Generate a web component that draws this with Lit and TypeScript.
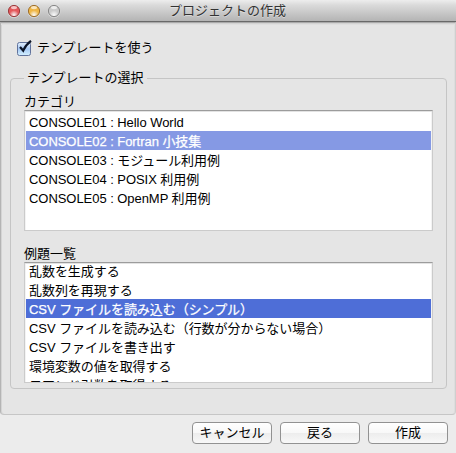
import { LitElement, html, css } from "lit";
import { customElement, property } from "lit/decorators.js";
import { classMap } from "lit/directives/class-map.js";

@customElement("list-box")
class ListBox extends LitElement {
  @property({ attribute: false }) items: string[] = [];
  @property({ type: Number }) selected = -1;
  @property({ type: Boolean, reflect: true }) focused = false;
  @property({ type: Boolean, reflect: true }) scrolled = false;

  static styles = css`
    :host {
      display: block;
      box-sizing: border-box;
      height: 121px;
      border: 1px solid #cbcbcb;
      border-top-color: #9c9c9c;
      padding: 1px 1px 0 1px;
      background: #fff;
      box-shadow: inset 0 1px #e3e3e3, inset -1px 0 #f3f3f3, inset 1px 0 #f3f3f3;
    }
    .view {
      height: 118px;
      overflow: hidden;
      letter-spacing: -0.05px;
    }
    .row {
      height: 19px;
      line-height: 21px;
      padding-left: 3px;
      white-space: pre;
    }
    :host([scrolled]) .row:first-child {
      margin-top: -3px;
    }
    .selected {
      color: #fff;
      background: #8599e4;
      -webkit-text-stroke: 0.25px #fff;
    }
    :host([focused]) .selected {
      background: #4e6ed7;
    }
  `;

  render() {
    return html`<div class="view">
      ${this.items.map(
        (t, i) =>
          html`<div class=${classMap({ row: true, selected: i === this.selected })}>${t}</div>`
      )}
    </div>`;
  }
}

@customElement("app-root")
class AppRoot extends LitElement {
  private categories = [
    "CONSOLE01 : Hello World",
    "CONSOLE02 : Fortran 小技集",
    "CONSOLE03 : モジュール利用例",
    "CONSOLE04 : POSIX 利用例",
    "CONSOLE05 : OpenMP 利用例",
  ];
  private examples = [
    "乱数を生成する",
    "乱数列を再現する",
    "CSV ファイルを読み込む（シンプル）",
    "CSV ファイルを読み込む（行数が分からない場合）",
    "CSV ファイルを書き出す",
    "環境変数の値を取得する",
    "コマンド引数を取得する",
  ];

  static styles = css`
    :host {
      display: flex;
      flex-direction: column;
      box-sizing: border-box;
      width: 456px;
      height: 453px;
      overflow: hidden;
      background: #ececec;
      color: #000;
      font: 13px "Liberation Sans", "Noto Sans CJK JP", sans-serif;
    }
    .titlebar {
      flex: none;
      position: relative;
      height: 22px;
      box-sizing: border-box;
      border-bottom: 1px solid #696969;
      border-radius: 4px 4px 0 0;
      background: linear-gradient(#ededed, #dadada 25%, #b4b4b4);
      display: flex;
      justify-content: center;
    }
    .title {
      line-height: 21px;
      color: #333;
      padding-right: 1px;
      text-shadow: 0 1px rgba(255, 255, 255, 0.4);
    }
    .lights {
      position: absolute;
      left: 7px;
      top: 4px;
      display: flex;
    }
    .panel {
      flex: none;
      box-sizing: border-box;
      height: 393px;
      padding: 17px 9px 0 9px;
      background: #e5e5e5;
      border: 1px solid #c6c6c6;
      border-top-color: #aaa;
      border-left-color: #b4b4b4;
      border-right-color: #cfcfcf;
      border-radius: 0 0 4px 4px;
      box-shadow: inset 0 1px #d3d3d3, inset 0 2px #dfdfdf, inset 1px 0 #d4d4d4,
        inset -1px 0 #dedede;
    }
    .check {
      display: flex;
      align-items: center;
      height: 17px;
      padding-left: 6px;
      gap: 5px;
    }
    .check svg {
      flex: none;
    }
    .check span {
      line-height: 17px;
      padding-bottom: 2px;
    }
    fieldset {
      box-sizing: border-box;
      height: 319px;
      width: 437px;
      margin: 13px 0 0;
      padding: 6px 13px 0;
      min-width: 0;
      border: 1px solid #c5c5c5;
      border-radius: 4px;
    }
    legend {
      height: 17px;
      line-height: 15px;
      padding: 0 3px;
    }
    .label {
      height: 17px;
      line-height: 18px;
    }
    .label.second {
      margin-top: 14px;
    }
    .buttons {
      display: flex;
      justify-content: flex-end;
      gap: 8px;
      padding: 7px 8px 0 0;
    }
    button {
      box-sizing: border-box;
      width: 80px;
      height: 22px;
      padding: 0;
      font: inherit;
      line-height: 20px;
      color: #000;
      border: 1px solid #929292;
      border-radius: 4px;
      background: linear-gradient(#fff, #f8f8f8 48%, #ededed 52%, #f8f8f8);
    }
  `;

  private light(id: number, fill: string, rim: string) {
    return html`<svg width="20" height="14" viewBox="0 0 20 14">
      <circle cx="7" cy="7.8" r="6" fill="none" stroke="#ddd" stroke-width=".7" />
      <circle cx="7" cy="7" r="5.6" fill="url(#l${id})" stroke=${rim} stroke-width="1" />
      <defs>
        <radialGradient id="l${id}" cx=".5" cy=".85" r=".75">
          <stop offset="0" stop-color="#fff" stop-opacity=".9" />
          <stop offset=".55" stop-color=${fill} />
          <stop offset="1" stop-color=${fill} />
        </radialGradient>
      </defs>
      <ellipse cx="7" cy="3.6" rx="3" ry="1.6" fill="#fff" opacity=".65" />
    </svg>`;
  }

  render() {
    return html`
      <div class="titlebar">
        <div class="lights">
          ${this.light(0, "#e4585b", "#9b3b3d")} ${this.light(1, "#efb645", "#9e6f2b")}
          ${this.light(2, "#cbcbcb", "#888888")}
        </div>
        <div class="title">プロジェクトの作成</div>
      </div>
      <div class="panel">
        <div class="check">
          <svg width="16" height="17" viewBox="0 0 16 17">
            <defs>
              <linearGradient id="box" x2="0" y2="1">
                <stop offset="0" stop-color="#e4effc" />
                <stop offset=".5" stop-color="#a5c8f4" />
                <stop offset="1" stop-color="#d5f1ff" />
              </linearGradient>
            </defs>
            <rect x="1.5" y="2.5" width="13" height="13" rx="2" fill="url(#box)" stroke="#61739c" />
            <path d="M4 7 7.2 10.6 Q9.5 5 15 0.8" fill="none" stroke="#0b1427" stroke-width="2.2" />
          </svg>
          <span>テンプレートを使う</span>
        </div>
        <fieldset>
          <legend>テンプレートの選択</legend>
          <div class="label">カテゴリ</div>
          <list-box .items=${this.categories} .selected=${1}></list-box>
          <div class="label second">例題一覧</div>
          <list-box .items=${this.examples} .selected=${2} focused scrolled></list-box>
        </fieldset>
      </div>
      <div class="buttons">
        <button>キャンセル</button>
        <button>戻る</button>
        <button>作成</button>
      </div>
    `;
  }
}
